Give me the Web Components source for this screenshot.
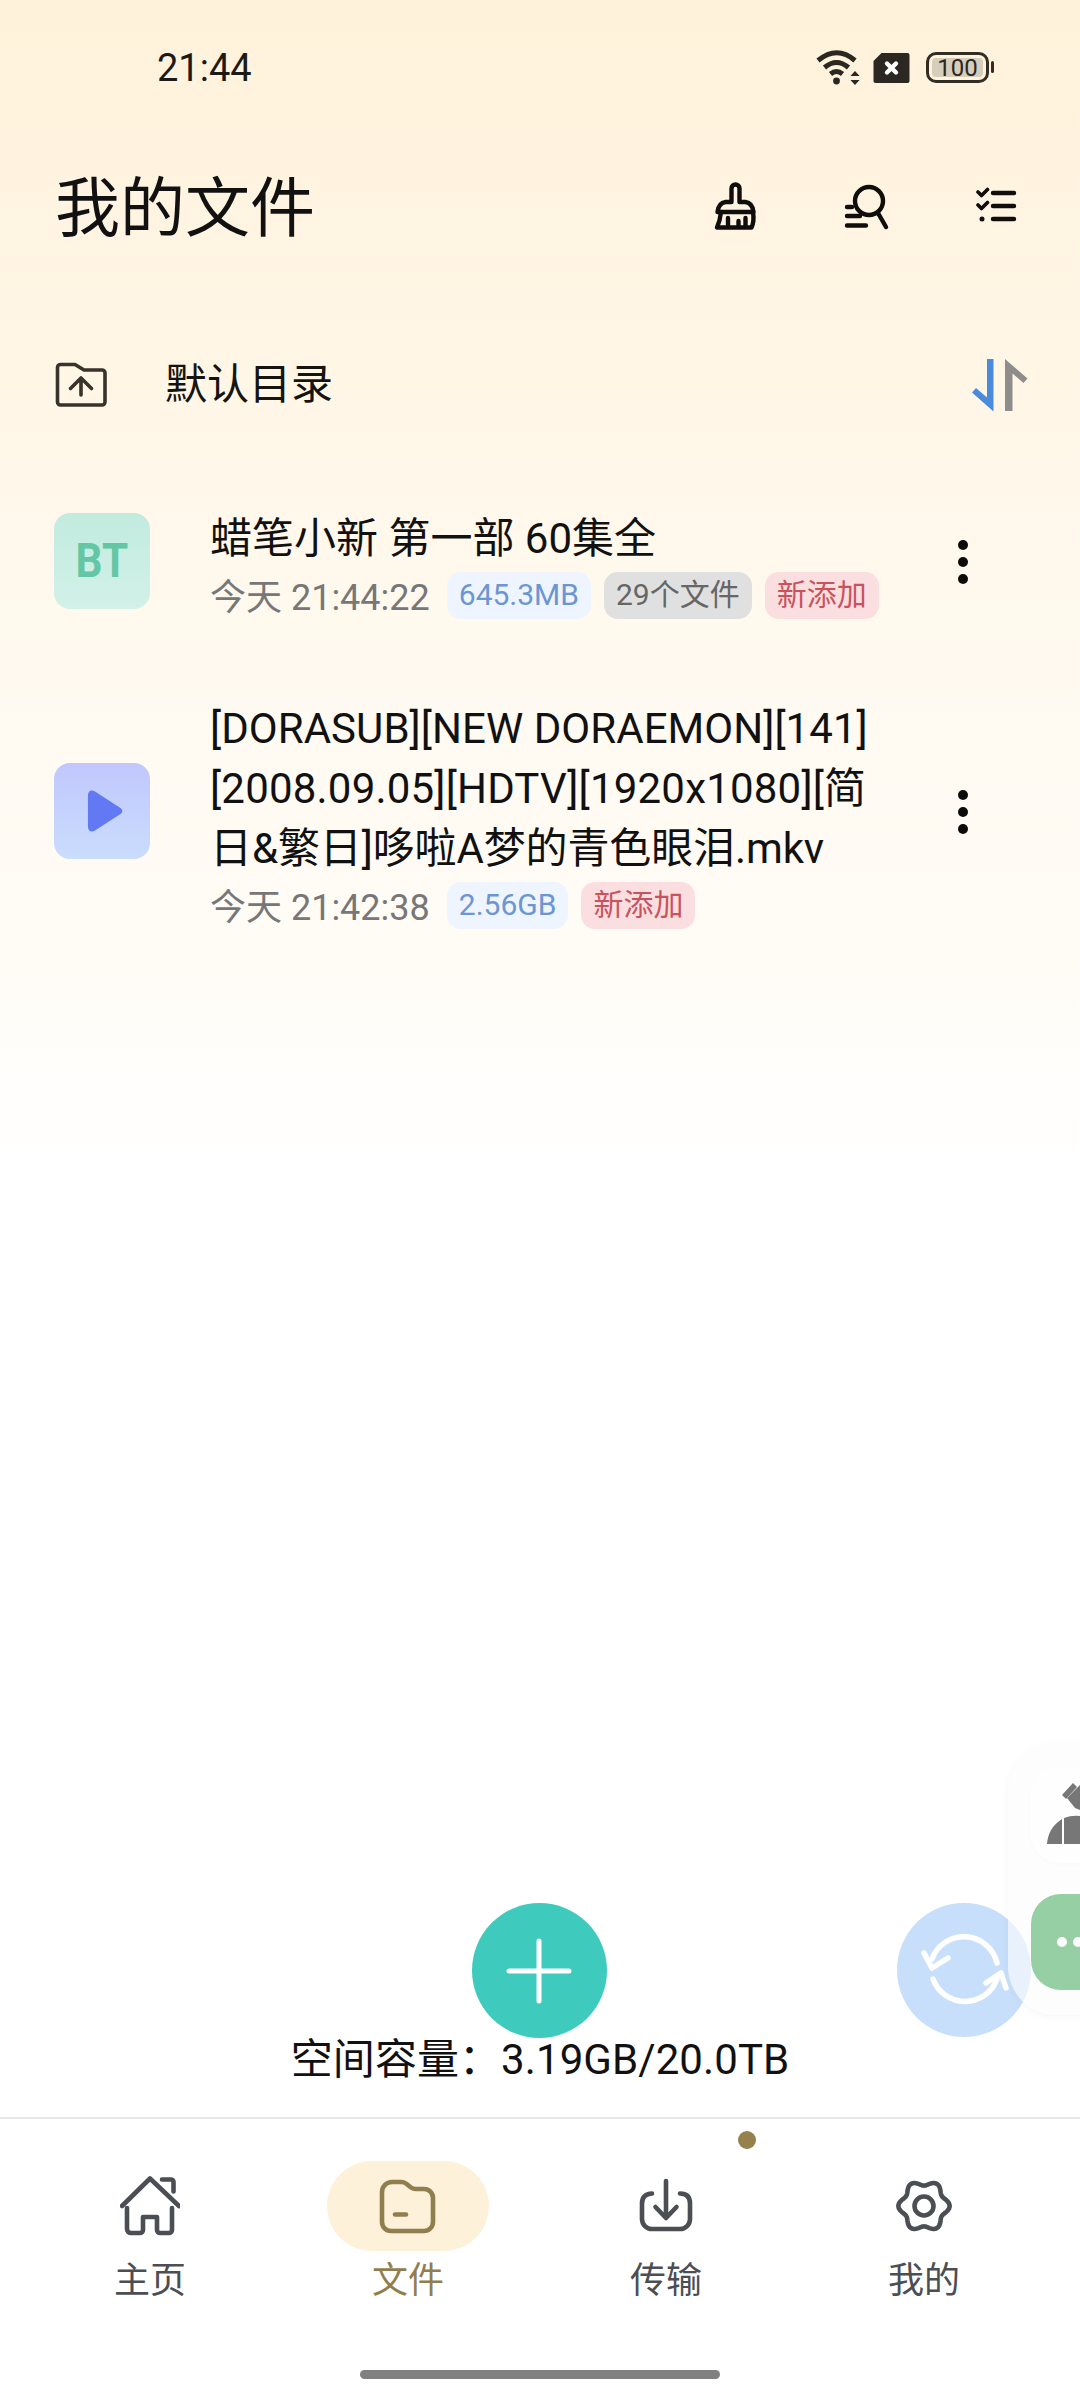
<!DOCTYPE html>
<html lang="zh-CN">
<head>
<meta charset="utf-8">
<title>我的文件</title>
<style>
html,body{margin:0;padding:0;width:1080px;height:2400px;overflow:hidden;background:#fff;}
body{font-family:Roboto,"Noto Sans CJK SC",sans-serif;}
</style>
</head>
<body>
<file-app></file-app>

<script>
function def(name, html){
  customElements.define(name, class extends HTMLElement{
    constructor(){
      super();
      this.attachShadow({mode:'open'}).innerHTML = html;
    }
  });
}

def('status-bar', `
<style>
:host{display:flex;align-items:center;height:136px;padding:0 86px 0 157px;box-sizing:border-box;color:#1c1a16;}
.t{font-size:38px;font-weight:400;flex:1;}
svg{display:block}
.bat{position:relative;width:68px;height:32px;margin-left:16px;}
.bat .b{position:absolute;left:0;top:0;width:63px;height:31px;box-sizing:border-box;border:3px solid #332e25;border-radius:10px;padding:3px;}
.bat .f{width:100%;height:100%;background:#d6cdbb;border-radius:4px;display:flex;align-items:center;justify-content:center;font-size:24px;line-height:1;color:#2b2721;}
.bat .n{position:absolute;left:65px;top:9px;width:3px;height:12px;background:#332e25;border-radius:2px;}
</style>
<span class="t">21:44</span>
<svg width="46" height="36" viewBox="814 50 46 36">
  <g fill="none" stroke="#2b2721" stroke-width="5" stroke-linecap="butt">
    <path d="M818 60.500q19-15.500 37 0"/><path d="M824.500 67.500q12-10 24 0"/><path d="M830.500 74q6-5 12 0"/>
  </g>
  <circle cx="836.500" cy="81" r="3.400" fill="#2b2721"/>
  <path d="M855 71l4.600 5h-9.200zM855 85l-4.600-5h9.200z" fill="#2b2721"/>
</svg>
<svg width="37" height="30" viewBox="873.500 53 37 30" style="margin-left:13px">
  <path d="M882 53h26a2 2 0 0 1 2 2v26a2 2 0 0 1-2 2h-32a2 2 0 0 1-2-2v-20z" fill="#2b2721"/>
  <path d="M887.500 63.500l9 9M896.500 63.500l-9 9" stroke="#fff" stroke-width="4.400" stroke-linecap="round"/>
</svg>
<div class="bat"><div class="b"><div class="f">100</div></div><div class="n"></div></div>
`);

def('top-header', `
<style>
:host{display:flex;align-items:center;height:142px;padding:0 62px 0 55px;box-sizing:border-box;}
h1{margin:0;padding-top:5px;flex:1;font-size:65px;font-weight:400;color:#111;line-height:1;}
svg{display:block;fill:none;stroke:#0f0e0c;stroke-width:4.400;stroke-linecap:round;stroke-linejoin:round}
</style>
<h1>我的文件</h1>
<svg width="48" height="50" viewBox="711 181 48 50">
  <path d="M729.500 201v-13.500a4 4 0 0 1 8 0V201h6q7 1 8 10H715.500q1-9 8-10z"/>
  <path d="M719 211q-1 9-4 15.500h34.500q3-6 1.500-15.500M726 226v-9M736.500 226v-6M743.500 226v-9"/>
</svg>
<svg width="48" height="50" viewBox="843 181 48 50" style="margin-left:82px">
  <circle cx="869" cy="200" r="14"/>
  <path d="M878 212l8 14M847 206h5M847 215h13M847 224.500h19"/>
</svg>
<svg width="44" height="40" viewBox="973 187 44 40" style="margin-left:83px">
  <path d="M992 193h21M992 206h21M992 219h21"/>
  <path d="M977 192l3.500 3.500 6-6M977 205l3.500 3.500 6-6" stroke-width="3.600"/>
  <circle cx="981" cy="219" r="2.500" fill="#0f0e0c" stroke="none"/>
</svg>
`);

def('dir-bar', `
<style>
:host{display:flex;align-items:center;height:110px;margin-top:52px;padding:0 52px 0 55px;box-sizing:border-box;}
span{flex:1;font-size:42px;color:#151411;line-height:1;margin-left:57px;}
svg{display:block}
</style>
<svg width="53" height="46" viewBox="55 360 53 46" fill="none" stroke="#38332b" stroke-width="3.600" stroke-linecap="round" stroke-linejoin="round">
  <path d="M57.500 365.500a3 3 0 0 1 3-3H75l9 5.500h18a3 3 0 0 1 3 3V400a3 3 0 0 1-3 3H60.500a3 3 0 0 1-3-3z"/>
  <path d="M81 393v-17M70.500 386.500L81 376l10.500 10.500"/>
</svg>
<span>默认目录</span>
<svg width="58" height="54" viewBox="970 355 58 54">
  <path d="M987 356h6.500v52.500l-21.500-19 4-4.500 11 9.500z" fill="#4a8bdc"/>
  <path d="M1005 356l22.500 19.500-4 4.500-11-9.500V408H1005z" fill="#8f8d8c"/>
</svg>
`);

def('file-tag', `
<style>
:host{display:inline-flex;align-items:center;height:47px;padding:0 12px;border-radius:14px;font-size:30px;line-height:1;box-sizing:border-box;white-space:nowrap;background:#eef5fe;color:#6c96d2;}
:host([kind=gray]){background:#e0e0e0;color:#666;}
:host([kind=new]){background:#fbdfe0;color:#c9525f;}
</style><slot></slot>
`);

def('file-thumb', `
<style>
:host{display:flex;align-items:center;justify-content:center;width:96px;height:96px;border-radius:16px;flex:none;}
:host([kind=bt]){background:linear-gradient(180deg,#c2ebde,#d2f1e8);}
:host([kind=video]){background:linear-gradient(180deg,#c1c7fd,#c9ddfc);}
.s{display:inline-block;font-size:48px;font-weight:700;color:#63c6a5;line-height:1;transform:scaleX(.88);}
</style><span class="s"><slot></slot></span>
`);

def('more-dots', `
<style>
:host{display:flex;flex-direction:column;align-items:center;gap:7px;width:12px;flex:none;}
i{display:block;width:10px;height:10px;border-radius:50%;background:#0c0b0a;}
</style><i></i><i></i><i></i>
`);

def('file-row', `
<style>
:host{display:flex;align-items:center;padding:0 117px 0 54px;}
.icon{flex:none;margin-bottom:5px;display:flex}
.body{flex:1;min-width:0;margin:0 91px 0 60px;}
.name{font-size:42px;line-height:60px;color:#111;padding-top:2px;}
.meta{display:flex;align-items:center;gap:13px;margin-top:2px;font-size:36px;color:#777;line-height:48px;height:48px;white-space:nowrap;}
.time{margin-right:4px;padding-top:6px}
.dots{flex:none;margin:0 -6px 2px}
</style>
<div class="icon"><slot name="icon"></slot></div>
<div class="body">
  <div class="name"><slot name="name"></slot></div>
  <div class="meta"><span class="time"><slot name="time"></slot></span><slot name="tags"></slot></div>
</div>
<more-dots class="dots"></more-dots>
`);

def('file-list', `
<style>
:host{display:flex;flex-direction:column;gap:78px;margin-top:67px;}
</style><slot></slot>
`);

def('add-fab', `
<style>
:host{display:flex;justify-content:center;padding-right:2px;}
div{width:135px;height:135px;border-radius:50%;background:#3ecbbd;display:flex;align-items:center;justify-content:center;}
svg{display:block}
</style>
<div><svg width="66" height="66" viewBox="0 0 66 66"><path d="M33 3v60M3 33h60" stroke="#fff" stroke-width="5" stroke-linecap="round"/></svg></div>
`);

def('storage-line', `
<style>
:host{display:block;text-align:center;font-size:42px;line-height:44px;color:#111;letter-spacing:.08px;}
</style><slot></slot>
`);

def('sync-fab', `
<style>
:host{position:absolute;left:897px;top:1903px;width:134px;height:134px;border-radius:50%;background:#c8dffb;display:block;}
svg{display:block}
</style>
<svg width="134" height="134" viewBox="-67 -67 134 134" fill="none" stroke="#fff" stroke-width="5.500" stroke-linecap="round" stroke-linejoin="round">
  <path d="M33 -7A34 34 0 0 0 -32 -11"/>
  <path d="M-40 -17L-32 -2L-16 -12"/>
  <path d="M-31 9A34 34 0 0 0 33 9"/>
  <path d="M22 13L37 3L42 18"/>
</svg>
`);

def('float-panel', `
<style>
:host{position:absolute;left:1008px;top:1743px;width:130px;height:272px;border-radius:48px 0 0 48px;background:rgba(251,251,251,.62);box-shadow:0 2px 8px rgba(0,0,0,.04);display:block;}
.c1{position:absolute;left:22px;top:24px;width:110px;height:96px;border-radius:30px 0 0 30px;background:#fefefe;box-shadow:0 1px 4px rgba(0,0,0,.02);}
.c2{position:absolute;left:23px;top:151px;width:110px;height:96px;border-radius:30px 0 0 30px;background:#95cfa3;}
svg{display:block;position:absolute;left:0;top:0}
i{position:absolute;top:43px;width:10px;height:10px;border-radius:50%;background:#fff;}
</style>
<div class="c1">
  <svg width="60" height="96" viewBox="1030 1767 60 96" fill="#777">
    <path d="M1062 1795l11-12 4 4-11 12z"/>
    <path d="M1067 1798l13-13v25l-5-2z"/>
    <path d="M1047 1844q1-16 15-25v25zM1064 1818q8-3 16-2v28h-16z"/>
  </svg>
</div>
<div class="c2"><i style="left:26px"></i><i style="left:42px"></i></div>
`);

def('nav-item', `
<style>
:host{display:flex;flex-direction:column;align-items:center;width:258px;position:relative;color:#4b4e53;}
:host([active]){color:#917e4f;}
.pill{width:162px;height:90px;border-radius:45px;display:flex;align-items:center;justify-content:center;}
:host([active]) .pill{background:#fdf1da;}
.label{font-size:36px;line-height:50px;margin-top:5px;}
.dot{display:none;position:absolute;top:-30px;left:201px;width:18px;height:18px;border-radius:50%;background:#96814d;}
:host([dot]) .dot{display:block;}
::slotted(svg){display:block}
</style>
<div class="dot"></div>
<div class="pill"><slot name="icon"></slot></div>
<div class="label"><slot></slot></div>
`);

def('bottom-nav', `
<style>
:host{display:flex;padding:42px 21px 0;border-top:2px solid #e6e6e6;background:#fff;}
</style><slot></slot>
`);

def('home-bar', `
<style>
:host{display:block;width:360px;height:9px;border-radius:5px;background:#808080;margin:64px auto 21px;}
</style>
`);

const SVGA = 'fill="none" stroke="currentColor" stroke-width="4.6" stroke-linecap="round" stroke-linejoin="round"';
function gear(){
  let d = '';
  for(let i=0;i<=180;i++){
    const th = i/180*Math.PI*2, r = 23+2.6*Math.cos(6*th);
    d += (i?'L':'M')+(324+r*Math.cos(th)).toFixed(2)+' '+(86+r*Math.sin(th)).toFixed(2);
  }
  return d+'Z';
}

def('file-app', `
<style>
:host{display:flex;flex-direction:column;position:relative;width:1080px;height:2400px;overflow:hidden;background:linear-gradient(180deg,#fff2da 0,#fff3de 100px,#fff7e9 460px,#fffaf1 700px,#fffcf6 950px,#fff 1180px);}
.spacer{flex:1}
.stor{padding-bottom:35px}
.l1{letter-spacing:.05px}.l2{letter-spacing:.2px}.l3{letter-spacing:-.12px}
</style>
<status-bar></status-bar>
<top-header></top-header>
<dir-bar></dir-bar>
<file-list>
  <file-row>
    <file-thumb slot="icon" kind="bt">BT</file-thumb>
    <span slot="name">蜡笔小新 第一部 60集全</span>
    <span slot="time">今天 21:44:22</span>
    <file-tag slot="tags">645.3MB</file-tag>
    <file-tag slot="tags" kind="gray">29个文件</file-tag>
    <file-tag slot="tags" kind="new">新添加</file-tag>
  </file-row>
  <file-row>
    <file-thumb slot="icon" kind="video">
      <svg width="42" height="44" viewBox="0 0 42 44" style="display:block;margin-left:6px"><path d="M2 6.500C2 2 6 .2 10 2.500l29 16.500c2.800 1.600 2.800 4.400 0 6L10 41.500c-4 2.300-8 .5-8-4z" fill="#6279f3"/></svg>
    </file-thumb>
    <span slot="name"><span class="l1">[DORASUB][NEW DORAEMON][141]</span><span class="l2">[2008.09.05][HDTV][1920x1080][简</span><span class="l3">日&amp;繁日]哆啦A梦的青色眼泪.mkv</span></span>
    <span slot="time">今天 21:42:38</span>
    <file-tag slot="tags">2.56GB</file-tag>
    <file-tag slot="tags" kind="new">新添加</file-tag>
  </file-row>
</file-list>
<div class="spacer"></div>
<add-fab></add-fab>
<storage-line class="stor">空间容量：3.19GB/20.0TB</storage-line>
<bottom-nav>
  <nav-item>
    <svg slot="icon" width="60" height="60" viewBox="30 26 60 60" ${SVGA}>
      <path d="M32 56L60 28.500 89 56M72 29.500h9a2.500 2.500 0 0 1 2.500 2.500v9.500"/>
      <path d="M37 58v21a4 4 0 0 0 4 4h9a3 3 0 0 0 3-3V67h14v13a3 3 0 0 0 3 3h9a3 3 0 0 0 3-3V58"/>
    </svg>主页
  </nav-item>
  <nav-item active>
    <svg slot="icon" width="60" height="60" viewBox="288 26 60 60" ${SVGA}>
      <path d="M292 42a10 10 0 0 1 10-10h9a8 8 0 0 1 5 1.500l5 4a8 8 0 0 0 5 1.500h8a9 9 0 0 1 9 9v24a9 9 0 0 1-9 9h-33a9 9 0 0 1-9-9z"/>
      <path d="M305 64.500h11"/>
    </svg>文件
  </nav-item>
  <nav-item dot>
    <svg slot="icon" width="60" height="60" viewBox="36 56 60 60" ${SVGA}>
      <path d="M66 61v36M55.500 87L66 98 76.500 87"/>
      <path d="M52 73.500q-10 .5-10 10V99a10 10 0 0 0 10 10h28a10 10 0 0 0 10-10V83.500q0-10-10-10"/>
    </svg>传输
  </nav-item>
  <nav-item>
    <svg slot="icon" width="60" height="60" viewBox="294 56 60 60" ${SVGA}>
      <path d="${gear()}"/>
      <circle cx="324" cy="86" r="9.500"/>
    </svg>我的
  </nav-item>
</bottom-nav>
<home-bar></home-bar>
<sync-fab></sync-fab>
<float-panel></float-panel>
`);
</script>
</body>
</html>
